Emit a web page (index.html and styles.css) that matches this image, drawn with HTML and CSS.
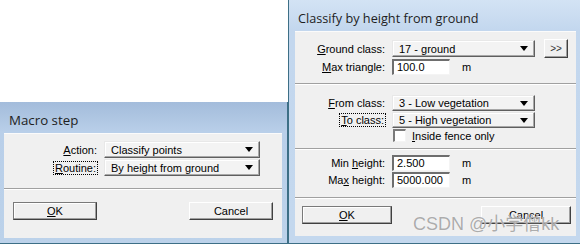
FILE: index.html
```html
<!DOCTYPE html>
<html lang="en">
  <head>
    <meta charset="UTF-8" />
    <title>Macro step</title>
    <link rel="stylesheet" href="styles.css">
  </head>
  <body>
    <div class="win macroWin">
      <div class="titleBar">Macro step</div>
      <div class="client">
        <div class="section macroFields">
          <div class="row">
            <span class="lbl"><u>A</u>ction:</span>
            <div class="combo macroCombo">Classify points<i class="arrow"></i></div>
          </div>
          <div class="row">
            <span class="lbl"><span class="focus"><u>R</u>outine:</span></span>
            <div class="combo macroCombo">By height from ground<i class="arrow"></i></div>
          </div>
        </div>
        <div class="section buttonBar macroButtons">
          <button class="btn defaultBtn"><u>O</u>K</button>
          <button class="btn">Cancel</button>
        </div>
      </div>
    </div>

    <div class="win classifyWin">
      <div class="titleBar">Classify by height from ground</div>
      <div class="client">
        <div class="section groundFields">
          <div class="row">
            <span class="lbl"><u>G</u>round class:</span>
            <div class="combo classCombo">17 - ground<i class="arrow"></i></div>
            <button class="btn moreBtn">&gt;&gt;</button>
          </div>
          <div class="row">
            <span class="lbl"><u>M</u>ax triangle:</span>
            <div class="textBox">100.0</div>
            <span class="unit">m</span>
          </div>
        </div>
        <div class="section classFields">
          <div class="row">
            <span class="lbl"><u>F</u>rom class:</span>
            <div class="combo classCombo">3 - Low vegetation<i class="arrow"></i></div>
          </div>
          <div class="row">
            <span class="lbl"><span class="focus"><u>T</u>o class:</span></span>
            <div class="combo classCombo">5 - High vegetation<i class="arrow"></i></div>
          </div>
          <div class="row checkRow">
            <span class="lbl"></span>
            <span class="checkBox"></span>
            <span class="checkText"><u>I</u>nside fence only</span>
          </div>
        </div>
        <div class="section heightFields">
          <div class="row">
            <span class="lbl">Min <u>h</u>eight:</span>
            <div class="textBox">2.500</div>
            <span class="unit">m</span>
          </div>
          <div class="row">
            <span class="lbl">Ma<u>x</u> height:</span>
            <div class="textBox">5000.000</div>
            <span class="unit">m</span>
          </div>
        </div>
        <div class="section buttonBar classifyButtons">
          <button class="btn defaultBtn"><u>O</u>K</button>
          <button class="btn">Cancel</button>
        </div>
      </div>
    </div>

    <div class="watermark">CSDN @小学僧kk</div>
  </body>
</html>
```

FILE: styles.css
```css
body {
  margin: 0;
  width: 580px;
  height: 245px;
  overflow: hidden;
  background-color: #ffffff;
  display: flex;
  align-items: flex-start;
  position: relative;
  font-family: "Liberation Sans", Arial, sans-serif;
  font-size: 11px;
  color: #000000;
}
u {
  text-decoration: underline;
  text-underline-offset: 1px;
}

/* window frames */
.win {
  box-sizing: border-box;
  display: flex;
  flex-direction: column;
}
.win > .titleBar {
  height: 31px;
  box-sizing: border-box;
  padding-top: 6px;
  line-height: 25px;
  font-family: "Open Sans", "Noto Sans", sans-serif;
  font-size: 12.7px;
  color: #1e1e1e;
  white-space: nowrap;
}
.win > .client {
  flex-grow: 1;
  background-color: #f0f0f0;
  border-top: 1px solid #fbfbfb;
  display: flex;
  flex-direction: column;
}
.macroWin {
  margin-top: 102px;
  width: 288px;
  height: 142px;
  padding: 0 5px 5px 4px;
  background: linear-gradient(#a3bcdb, #b9cfe9 30px, #bcd2ea);
  border-right: 1px solid #3d6f86;
  border-bottom: 1px solid #3d6f86;
}
.macroWin > .titleBar {
  padding-left: 5px;
  font-size: 13.3px;
}
.classifyWin {
  width: 292px;
  height: 244px;
  padding: 0 4px 7px 6px;
  background: linear-gradient(#d3e3f4, #c3d7ee 30px, #c4d8ee);
  border-left: 1px solid #3d6f86;
  border-bottom: 1px solid #3d6f86;
}
.classifyWin > .titleBar {
  padding-left: 3px;
}

/* sections with etched separators */
.section {
  box-sizing: border-box;
  display: flex;
  flex-direction: column;
}
.section + .section {
  border-top: 1px solid #a0a0a0;
  box-shadow: inset 0 1px #ffffff;
}
.row {
  display: flex;
  align-items: center;
}
.lbl {
  text-align: right;
  white-space: nowrap;
  margin-right: 7px;
}
.focus {
  outline: 1px dotted #000000;
  outline-offset: 0px;
  padding: 0 1px;
}

.macroFields {
  height: 54px;
  padding-top: 7px;
  gap: 1px;
}
.macroFields .lbl {
  width: 93px;
}
.macroButtons {
  flex-grow: 1;
}

.groundFields {
  height: 51px;
  padding-top: 7px;
  gap: 1px;
}
.classFields {
  height: 65px;
  padding-top: 11px;
  gap: 1px;
}
.classFields .combo {
  height: 16px;
}
.heightFields {
  height: 49px;
  padding-top: 6px;
  gap: 1px;
}
.classifyButtons {
  flex-grow: 1;
}
.classifyWin .lbl {
  width: 90px;
}

/* controls */
.combo {
  box-sizing: border-box;
  height: 17px;
  display: flex;
  align-items: center;
  padding-left: 6px;
  background-color: #f3f3f3;
  border: 1px solid;
  border-color: #e8e8e8 #5f5f5f #5f5f5f #e8e8e8;
  box-shadow: inset -1px -1px #a8a8a8, inset 1px 1px #ffffff;
  white-space: nowrap;
}
.combo > .arrow {
  margin-left: auto;
  margin-right: 6px;
  width: 0;
  height: 0;
  border-left: 4px solid transparent;
  border-right: 4px solid transparent;
  border-top: 5px solid #000000;
}
.macroCombo {
  width: 156px;
}
.classCombo {
  width: 143px;
}
.textBox {
  box-sizing: border-box;
  width: 58px;
  height: 16px;
  line-height: 13px;
  padding-left: 3px;
  background-color: #ffffff;
  border-style: solid;
  border-width: 2px 1px 1px 2px;
  border-color: #6e6e6e #f4f4f4 #f4f4f4 #6e6e6e;
}
.unit {
  margin-left: 12px;
}
.checkRow {
  margin-top: 0;
}
.checkBox {
  box-sizing: border-box;
  width: 13px;
  height: 13px;
  margin-left: 1px;
  background-color: #ffffff;
  border-style: solid;
  border-width: 2px 1px 1px 2px;
  border-color: #7a7a7a #f4f4f4 #f4f4f4 #7a7a7a;
}
.checkText {
  margin-left: 6px;
}

.btn {
  box-sizing: border-box;
  font-family: "Liberation Sans", Arial, sans-serif;
  font-size: 11px;
  color: #000000;
  background-color: #f0f0f0;
  border: 1px solid;
  border-color: #ffffff #404040 #404040 #ffffff;
  box-shadow: inset -1px -1px #a0a0a0;
  padding: 0;
  height: 18px;
}
.defaultBtn {
  border-color: #7a7a7a #404040 #404040 #7a7a7a;
  box-shadow: inset -1px -1px #a0a0a0, inset 1px 1px #ffffff;
}
.moreBtn {
  width: 24px;
  height: 19px;
  margin-left: 9px;
  font-size: 10px;
  color: #333333;
}
.buttonBar {
  flex-direction: row;
  justify-content: space-between;
  align-items: flex-start;
}
.macroButtons {
  padding: 13px 9px 0 9px;
}
.macroButtons > .btn {
  width: 84px;
}
.classifyButtons {
  padding: 8px 5px 0 7px;
}
.classifyButtons > .btn {
  width: 90px;
}

.watermark {
  position: absolute;
  left: 413px;
  top: 213px;
  font-family: "Liberation Sans", "Noto Sans CJK SC", sans-serif;
  font-size: 18px;
  line-height: 22px;
  color: rgba(150, 150, 150, 0.8);
  white-space: nowrap;
  text-shadow: 0 0 1px #ffffff;
}
```
